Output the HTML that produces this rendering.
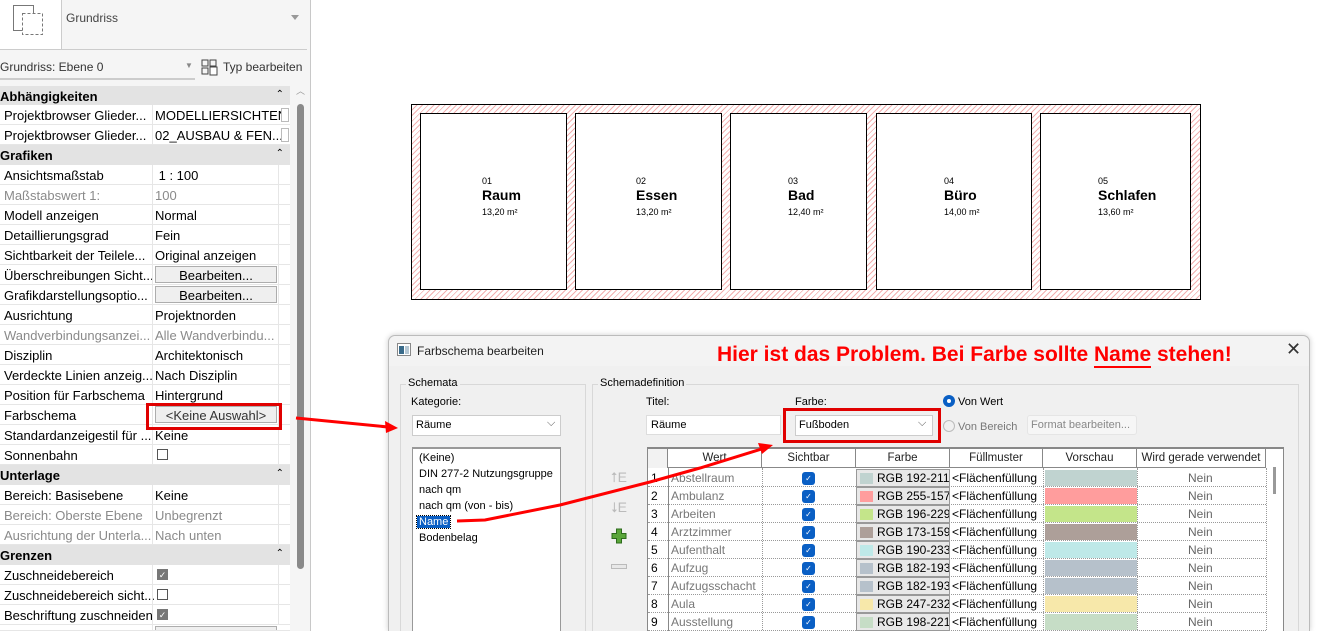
<!DOCTYPE html>
<html style="overflow:hidden;width:1321px;height:631px"><head><meta charset="utf-8"><style>
*{box-sizing:border-box;margin:0;padding:0}
body{width:1321px;height:631px;overflow:hidden;background:#fff;font-family:"Liberation Sans","DejaVu Sans",sans-serif;font-size:13px;color:#000;position:relative}
.a{position:absolute;white-space:nowrap}
.row{position:absolute;left:0;width:290px;height:20px;border-bottom:1px solid #e6e6e6;background:#fff;overflow:hidden}
.row .k{position:absolute;left:4px;top:3px}
.row .v{position:absolute;left:155px;top:3px}
.row .s1{position:absolute;left:152px;top:0;width:1px;height:20px;background:#e6e6e6}
.row .s2{position:absolute;left:278px;top:0;width:1px;height:20px;background:#e6e6e6}
.g{color:#8a8a8a}
.hd{position:absolute;left:0;width:290px;height:20px;background:#e3e3e3;font-weight:bold;padding:3px 0 0 0}
.hd i{position:absolute;right:6px;top:3px;font-style:normal;font-weight:normal;font-size:10px}
.btn{position:absolute;left:155px;top:1px;width:122px;height:17px;border:1px solid #adadad;background:#efefef;text-align:center;padding-top:1px}
.cb{position:absolute;left:157px;top:4px;width:11px;height:11px;border:1px solid #555;background:#fff}
.cb.on{background:#777;border-color:#777;color:#fff;font-size:9px;line-height:10px;text-align:center}
.room{position:absolute;top:113px;height:177px;background:#fff;border:1px solid #000}
.room div{position:absolute;font-family:"Liberation Sans Narrow","Liberation Sans",sans-serif}
.tr{position:absolute;left:648px;width:618px;height:18px;border-bottom:1px dotted #999}
.tr span{position:absolute;top:2px}
.chk{position:absolute;left:154px;top:3px;width:13px;height:13px;border-radius:3px;background:#0a5fc4;color:#fff;font-size:8px;text-align:center;line-height:13px}
.fb{position:absolute;left:208px;top:0;width:94px;height:18px;background:#e8e8e8;border:1px solid #999;overflow:hidden}
.fb b{position:absolute;left:3px;top:3px;width:13px;height:11px}
.fb span{left:20px;top:1px}
.pv{position:absolute;left:397px;top:1px;width:92px;height:16px}
</style></head><body>

<div class="a" style="left:0;top:0;width:310px;height:631px;background:#f5f5f5"></div>
<div class="a" style="left:0;top:0;width:62px;height:50px;background:#fff;border-right:1px solid #ccc;border-bottom:1px solid #ccc"></div>
<svg class="a" style="left:12px;top:4px" width="34" height="32"><rect x="1.5" y="1.5" width="20" height="25" fill="none" stroke="#777"/><rect x="10.5" y="9.5" width="20" height="21" fill="#fff" stroke="#777" stroke-dasharray="3,2"/></svg>
<div class="a" style="left:66px;top:11px;font-size:12px;color:#444">Grundriss</div>
<div class="a" style="left:291px;top:15px;width:0;height:0;border-left:4px solid transparent;border-right:4px solid transparent;border-top:5px solid #999"></div>
<div class="a" style="left:62px;top:49px;width:245px;height:1px;background:#ccc"></div>
<div class="a" style="left:0;top:60px;font-size:12px;color:#333">Grundriss: Ebene 0</div>
<div class="a" style="left:0;top:78px;width:195px;height:2px;background:#ccc"></div>
<div class="a" style="left:185px;top:61px;font-size:8px;color:#888">▼</div>
<svg class="a" style="left:201px;top:59px" width="17" height="17"><rect x="1" y="1" width="6" height="6" fill="none" stroke="#444"/><rect x="1" y="9" width="6" height="6" fill="none" stroke="#444"/><rect x="9" y="1" width="6" height="6" fill="none" stroke="#444"/><rect x="9" y="8" width="7" height="8" fill="#fff" stroke="#444"/></svg>
<div class="a" style="left:223px;top:60px;font-size:12px;color:#333">Typ bearbeiten</div>

<div class="hd" style="top:86px">Abhängigkeiten<i>⌃</i></div>
<div class="row" style="top:105px"><span class="k">Projektbrowser Glieder...</span><span class="s1"></span><span class="v">MODELLIERSICHTEN</span><span class="a" style="left:281px;top:3px;width:8px;height:14px;border:1px solid #bbb;background:#fff"></span></div>
<div class="row" style="top:125px"><span class="k">Projektbrowser Glieder...</span><span class="s1"></span><span class="v">02_AUSBAU &amp; FEN...</span><span class="a" style="left:281px;top:3px;width:8px;height:14px;border:1px solid #bbb;background:#fff"></span></div>
<div class="hd" style="top:145px">Grafiken<i>⌃</i></div>
<div class="row" style="top:165px"><span class="k">Ansichtsmaßstab</span><span class="s1"></span><span class="v">&nbsp;1 : 100</span><span class="s2"></span></div>
<div class="row" style="top:185px"><span class="k g">Maßstabswert 1:</span><span class="s1"></span><span class="v g">100</span><span class="s2"></span></div>
<div class="row" style="top:205px"><span class="k">Modell anzeigen</span><span class="s1"></span><span class="v">Normal</span><span class="s2"></span></div>
<div class="row" style="top:225px"><span class="k">Detaillierungsgrad</span><span class="s1"></span><span class="v">Fein</span><span class="s2"></span></div>
<div class="row" style="top:245px"><span class="k">Sichtbarkeit der Teilele...</span><span class="s1"></span><span class="v">Original anzeigen</span><span class="s2"></span></div>
<div class="row" style="top:265px"><span class="k">Überschreibungen Sicht...</span><span class="s1"></span><span class="btn">Bearbeiten...</span><span class="s2"></span></div>
<div class="row" style="top:285px"><span class="k">Grafikdarstellungsoptio...</span><span class="s1"></span><span class="btn">Bearbeiten...</span><span class="s2"></span></div>
<div class="row" style="top:305px"><span class="k">Ausrichtung</span><span class="s1"></span><span class="v">Projektnorden</span><span class="s2"></span></div>
<div class="row" style="top:325px"><span class="k g">Wandverbindungsanzei...</span><span class="s1"></span><span class="v g">Alle Wandverbindu...</span><span class="s2"></span></div>
<div class="row" style="top:345px"><span class="k">Disziplin</span><span class="s1"></span><span class="v">Architektonisch</span><span class="s2"></span></div>
<div class="row" style="top:365px"><span class="k">Verdeckte Linien anzeig...</span><span class="s1"></span><span class="v">Nach Disziplin</span><span class="s2"></span></div>
<div class="row" style="top:385px"><span class="k">Position für Farbschema</span><span class="s1"></span><span class="v">Hintergrund</span><span class="s2"></span></div>
<div class="row" style="top:405px"><span class="k">Farbschema</span><span class="s1"></span><span class="btn" style="color:#333">&lt;Keine Auswahl&gt;</span><span class="s2"></span></div>
<div class="row" style="top:425px"><span class="k">Standardanzeigestil für ...</span><span class="s1"></span><span class="v">Keine</span><span class="s2"></span></div>
<div class="row" style="top:445px"><span class="k">Sonnenbahn</span><span class="s1"></span><span class="cb"></span><span class="s2"></span></div>
<div class="hd" style="top:465px">Unterlage<i>⌃</i></div>
<div class="row" style="top:485px"><span class="k">Bereich: Basisebene</span><span class="s1"></span><span class="v">Keine</span><span class="s2"></span></div>
<div class="row" style="top:505px"><span class="k g">Bereich: Oberste Ebene</span><span class="s1"></span><span class="v g">Unbegrenzt</span><span class="s2"></span></div>
<div class="row" style="top:525px"><span class="k g">Ausrichtung der Unterla...</span><span class="s1"></span><span class="v g">Nach unten</span><span class="s2"></span></div>
<div class="hd" style="top:545px">Grenzen<i>⌃</i></div>
<div class="row" style="top:565px"><span class="k">Zuschneidebereich</span><span class="s1"></span><span class="cb on">✓</span><span class="s2"></span></div>
<div class="row" style="top:585px"><span class="k">Zuschneidebereich sicht...</span><span class="s1"></span><span class="cb"></span><span class="s2"></span></div>
<div class="row" style="top:605px"><span class="k">Beschriftung zuschneiden</span><span class="s1"></span><span class="cb on">✓</span><span class="s2"></span></div>
<div class="row" style="top:625px;height:6px"><span class="s1"></span><span class="a" style="left:155px;top:1px;width:122px;height:8px;border:1px solid #adadad;background:#efefef"></span></div>
<div class="a" style="left:146px;top:403px;width:136px;height:27px;border:3px solid #e00000"></div>
<div class="a" style="left:290px;top:86px;width:17px;height:545px;background:#f5f5f5"></div>
<div class="a" style="left:296px;top:84px;font-size:9px;color:#999">︿</div>
<div class="a" style="left:297px;top:104px;width:7px;height:465px;border-radius:4px;background:#8a8a8a"></div>
<div class="a" style="left:310px;top:0;width:1px;height:631px;background:#c8c8c8"></div>

<div class="a" style="left:411px;top:104px;width:790px;height:196px;border:1px solid #000;background:repeating-linear-gradient(135deg,#fff 0 3px,#f3b0b0 3px 4px)"></div>
<div class="room" style="left:420px;width:147px"><div style="left:61px;top:62px;font-size:9px">01</div><div style="left:61px;top:73px;font-size:14px;font-weight:bold">Raum</div><div style="left:61px;top:93px;font-size:9px">13,20 m²</div></div>
<div class="room" style="left:575px;width:147px"><div style="left:60px;top:62px;font-size:9px">02</div><div style="left:60px;top:73px;font-size:14px;font-weight:bold">Essen</div><div style="left:60px;top:93px;font-size:9px">13,20 m²</div></div>
<div class="room" style="left:730px;width:137px"><div style="left:57px;top:62px;font-size:9px">03</div><div style="left:57px;top:73px;font-size:14px;font-weight:bold">Bad</div><div style="left:57px;top:93px;font-size:9px">12,40 m²</div></div>
<div class="room" style="left:876px;width:156px"><div style="left:67px;top:62px;font-size:9px">04</div><div style="left:67px;top:73px;font-size:14px;font-weight:bold">Büro</div><div style="left:67px;top:93px;font-size:9px">14,00 m²</div></div>
<div class="room" style="left:1040px;width:151px"><div style="left:57px;top:62px;font-size:9px">05</div><div style="left:57px;top:73px;font-size:14px;font-weight:bold">Schlafen</div><div style="left:57px;top:93px;font-size:9px">13,60 m²</div></div>

<div class="a" style="left:388px;top:335px;width:922px;height:296px;background:#f0f0f0;border:1px solid #bbb;border-bottom:none;border-radius:7px 7px 0 0;box-shadow:0 0 6px rgba(0,0,0,.2)"></div>
<div class="a" style="left:389px;top:336px;width:920px;height:30px;background:#f3f3f3;border-radius:7px 7px 0 0"></div>
<svg class="a" style="left:397px;top:343px" width="14" height="13"><rect x=".5" y=".5" width="13" height="12" fill="#fff" stroke="#888"/><rect x="2" y="3" width="5" height="8" fill="#3a6b8a"/><rect x="8" y="3" width="4" height="8" fill="#b5c7d3"/></svg>
<div class="a" style="left:417px;top:344px;font-size:12px;color:#222">Farbschema bearbeiten</div>
<div class="a" style="left:717px;top:343px;font-size:21px;font-weight:bold;color:#f00">Hier ist das Problem. Bei Farbe sollte <span style="border-bottom:2px solid #f00">Name</span> stehen!</div>
<div class="a" style="left:1286px;top:339px;font-size:18px;color:#333">✕</div>

<div class="a" style="left:400px;top:384px;width:186px;height:260px;border:1px solid #d8d8d8"></div>
<div class="a" style="left:406px;top:377px;background:#f0f0f0;padding:0 2px;font-size:11px">Schemata</div>
<div class="a" style="left:411px;top:396px;font-size:11px">Kategorie:</div>
<div class="a" style="left:412px;top:415px;width:149px;height:21px;background:#fff;border:1px solid #ccc"><span class="a" style="left:3px;top:3px;font-size:11px">Räume</span><span class="a" style="left:134px;top:1px;font-size:11px;color:#555">⌵</span></div>
<div class="a" style="left:412px;top:447px;width:149px;height:190px;background:#fff;border:1px solid #999;border-top:2px solid #999;font-size:11px"></div>
<div class="a" style="left:419px;top:450px;font-size:11px;line-height:16px">(Keine)<br>DIN 277-2 Nutzungsgruppe<br>nach qm<br>nach qm (von - bis)<br><span style="background:#0a5fc4;color:#fff;padding:0 2px;margin-left:-2px;outline:1px dotted #000">Name</span><br>Bodenbelag</div>

<div class="a" style="left:592px;top:384px;width:707px;height:260px;border:1px solid #d8d8d8"></div>
<div class="a" style="left:598px;top:377px;background:#f0f0f0;padding:0 2px;font-size:11px">Schemadefinition</div>
<div class="a" style="left:646px;top:396px;font-size:11px">Titel:</div>
<div class="a" style="left:646px;top:415px;width:135px;height:20px;background:#fff;border:1px solid #ddd"><span class="a" style="left:4px;top:3px;font-size:11px">Räume</span></div>
<div class="a" style="left:795px;top:396px;font-size:11px">Farbe:</div>
<div class="a" style="left:795px;top:415px;width:138px;height:21px;background:#fff;border:1px solid #ccc"><span class="a" style="left:3px;top:3px;font-size:11px">Fußboden</span><span class="a" style="left:122px;top:1px;font-size:11px;color:#555">⌵</span></div>
<div class="a" style="left:783px;top:408px;width:158px;height:35px;border:3px solid #e00000"></div>
<div class="a" style="left:943px;top:395px;width:12px;height:12px;border-radius:50%;background:#0a5fc4"><span class="a" style="left:4px;top:4px;width:4px;height:4px;border-radius:50%;background:#fff"></span></div>
<div class="a" style="left:958px;top:396px;font-size:11px">Von Wert</div>
<div class="a" style="left:943px;top:420px;width:12px;height:12px;border-radius:50%;border:1px solid #bbb"></div>
<div class="a" style="left:958px;top:421px;font-size:11px;color:#777">Von Bereich</div>
<div class="a" style="left:1027px;top:415px;width:110px;height:20px;background:#f6f6f6;border:1px solid #e5e5e5;border-radius:3px"><span class="a" style="left:3px;top:3px;font-size:11px;color:#888">Format bearbeiten...</span></div>

<div class="a" style="left:611px;top:469px;font-size:14px;color:#bbb">⭡E</div>
<div class="a" style="left:611px;top:499px;font-size:14px;color:#bbb">⭣E</div>
<svg class="a" style="left:611px;top:528px" width="16" height="16"><path d="M5.5 1h5v4.5H15v5h-4.5V15h-5v-4.5H1v-5h4.5z" fill="#5aa63a" stroke="#2d6b1c"/></svg>
<div class="a" style="left:611px;top:564px;width:16px;height:5px;border:1px solid #bbb;background:#e8e8e8"></div>

<div class="a" style="left:647px;top:447px;width:637px;height:190px;background:#fff;border:1px solid #888;border-top:2px solid #888"></div>
<div class="a" style="left:648px;top:449px;width:618px;height:19px;border-bottom:1px solid #888;font-size:11.5px;color:#222">
<span class="a" style="left:0;top:0;width:20px;height:19px;border-right:1px solid #888;background:#f2f2f2"></span>
<span class="a" style="left:20px;width:94px;height:19px;border-right:1px solid #888;text-align:center;top:0;padding-top:3px">Wert</span>
<span class="a" style="left:114px;width:94px;height:19px;border-right:1px solid #888;text-align:center;top:0;padding-top:3px">Sichtbar</span>
<span class="a" style="left:208px;width:94px;height:19px;border-right:1px solid #888;text-align:center;top:0;padding-top:3px">Farbe</span>
<span class="a" style="left:302px;width:93px;height:19px;border-right:1px solid #888;text-align:center;top:0;padding-top:3px">Füllmuster</span>
<span class="a" style="left:395px;width:94px;height:19px;border-right:1px solid #888;text-align:center;top:0;padding-top:3px">Vorschau</span>
<span class="a" style="left:489px;width:129px;height:19px;border-right:1px solid #888;text-align:center;top:0;padding-top:3px">Wird gerade verwendet</span>
</div>
<div class="a" style="left:668px;top:468px;width:1px;height:170px;background:#888"></div>
<div class="a" style="left:762px;top:468px;width:1px;height:170px;border-left:1px dotted #999"></div>
<div class="a" style="left:1043px;top:468px;width:1px;height:170px;border-left:1px dotted #999"></div>
<div class="a" style="left:1137px;top:468px;width:1px;height:170px;border-left:1px dotted #999"></div>
<div class="a" style="left:1266px;top:468px;width:1px;height:170px;border-left:1px dotted #999"></div>
<div class="a" style="left:1273px;top:467px;width:3px;height:27px;background:#999"></div>

<div style="font-size:12px">
<div class="tr" style="top:469px"><span style="left:3px">1</span><span style="left:23px;color:#777">Abstellraum</span><i class="chk">✓</i><div class="fb"><b style="background:#c0d3d0"></b><span class="a">RGB 192-211-</span></div><span style="left:304px">&lt;Flächenfüllung</span><div class="pv" style="background:#c0d3d0"></div><span style="left:540px;color:#666">Nein</span></div>
<div class="tr" style="top:487px"><span style="left:3px">2</span><span style="left:23px;color:#777">Ambulanz</span><i class="chk">✓</i><div class="fb"><b style="background:#ff9d9d"></b><span class="a">RGB 255-157-</span></div><span style="left:304px">&lt;Flächenfüllung</span><div class="pv" style="background:#ff9d9d"></div><span style="left:540px;color:#666">Nein</span></div>
<div class="tr" style="top:505px"><span style="left:3px">3</span><span style="left:23px;color:#777">Arbeiten</span><i class="chk">✓</i><div class="fb"><b style="background:#c4e58a"></b><span class="a">RGB 196-229-</span></div><span style="left:304px">&lt;Flächenfüllung</span><div class="pv" style="background:#c4e58a"></div><span style="left:540px;color:#666">Nein</span></div>
<div class="tr" style="top:523px"><span style="left:3px">4</span><span style="left:23px;color:#777">Arztzimmer</span><i class="chk">✓</i><div class="fb"><b style="background:#ad9f99"></b><span class="a">RGB 173-159-</span></div><span style="left:304px">&lt;Flächenfüllung</span><div class="pv" style="background:#ad9f99"></div><span style="left:540px;color:#666">Nein</span></div>
<div class="tr" style="top:541px"><span style="left:3px">5</span><span style="left:23px;color:#777">Aufenthalt</span><i class="chk">✓</i><div class="fb"><b style="background:#bee9e8"></b><span class="a">RGB 190-233-</span></div><span style="left:304px">&lt;Flächenfüllung</span><div class="pv" style="background:#bee9e8"></div><span style="left:540px;color:#666">Nein</span></div>
<div class="tr" style="top:559px"><span style="left:3px">6</span><span style="left:23px;color:#777">Aufzug</span><i class="chk">✓</i><div class="fb"><b style="background:#b6c1cb"></b><span class="a">RGB 182-193-</span></div><span style="left:304px">&lt;Flächenfüllung</span><div class="pv" style="background:#b6c1cb"></div><span style="left:540px;color:#666">Nein</span></div>
<div class="tr" style="top:577px"><span style="left:3px">7</span><span style="left:23px;color:#777">Aufzugsschacht</span><i class="chk">✓</i><div class="fb"><b style="background:#b6c1cb"></b><span class="a">RGB 182-193-</span></div><span style="left:304px">&lt;Flächenfüllung</span><div class="pv" style="background:#b6c1cb"></div><span style="left:540px;color:#666">Nein</span></div>
<div class="tr" style="top:595px"><span style="left:3px">8</span><span style="left:23px;color:#777">Aula</span><i class="chk">✓</i><div class="fb"><b style="background:#f7e8aa"></b><span class="a">RGB 247-232-</span></div><span style="left:304px">&lt;Flächenfüllung</span><div class="pv" style="background:#f7e8aa"></div><span style="left:540px;color:#666">Nein</span></div>
<div class="tr" style="top:613px"><span style="left:3px">9</span><span style="left:23px;color:#777">Ausstellung</span><i class="chk">✓</i><div class="fb"><b style="background:#c6ddc6"></b><span class="a">RGB 198-221-</span></div><span style="left:304px">&lt;Flächenfüllung</span><div class="pv" style="background:#c6ddc6"></div><span style="left:540px;color:#666">Nein</span></div>
</div>

<svg class="a" style="left:0;top:0" width="1321" height="631">
<path d="M296 418 L388 427" stroke="#f00" stroke-width="3" fill="none"/>
<path d="M398 428 L385 421 L386 433 Z" fill="#f00"/>
<path d="M457 521 L485 520 L560 505 L650 482 L700 468 L765 448" stroke="#f00" stroke-width="3" fill="none"/>
<path d="M773 445 L758 443 L762 454 Z" fill="#f00"/>
</svg>
</body></html>
